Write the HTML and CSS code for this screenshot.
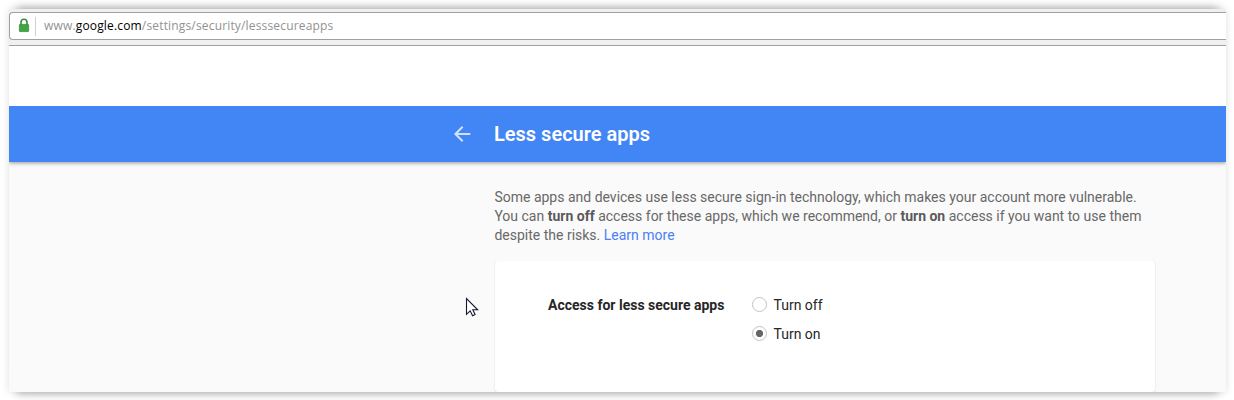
FILE: index.html
```html
<!DOCTYPE html>
<html lang="en">
<head>
<meta charset="utf-8">
<title>Less secure apps</title>
<link rel="stylesheet" href="styles.css">
</head>
<body>
<div class="window">
  <div class="toolbar">
    <div class="address">
      <svg class="lock" width="12" height="15" viewBox="0 0 12 15"><path d="M3 7V4.2a3 3 0 0 1 6 0V7" fill="none" stroke="#388e3c" stroke-width="1.6"/><rect x="1.4" y="6.4" width="9.2" height="7.2" rx=".6" fill="#3fa640" stroke="#388e3c" stroke-width=".8"/></svg>
      <span class="divider"></span>
      <span class="url">www.<span class="host">google.com</span>/settings/security/lesssecureapps</span>
    </div>
  </div>
  <div class="blank"></div>
  <header class="header">
    <svg class="back" width="18" height="18" viewBox="0 0 18 18" fill="none" stroke="#d0e1fd" stroke-width="2"><path d="M17.3 9H2.4M9.7 1.7 2.4 9l7.3 7.3"/></svg>
    <h1 class="title">Less secure apps</h1>
  </header>
  <main class="content">
    <p class="intro"><span class="line line-1">Some apps and devices use less secure sign-in technology, which makes your account more vulnerable.</span><span class="line line-2">You can <b>turn off</b> access for these apps, which we recommend, or <b>turn on</b> access if you want to use them</span><span class="line line-3">despite the risks. <a class="link">Learn more</a></span></p>
    <section class="card">
      <div class="label">Access for less secure apps</div>
      <div class="options">
        <div class="option"><span class="radio"></span>Turn off</div>
        <div class="option"><span class="radio checked"></span>Turn on</div>
      </div>
    </section>
  </main>
</div>
<svg class="cursor" width="14" height="21" viewBox="0 0 14 21"><path d="M1.5 1.5v15.8l3.7-3.5 2.4 5 2.5-1.2-2.3-4.8h4.9z" fill="#fff" stroke="#15182c" stroke-width="1.1"/></svg>
</body>
</html>
```
FILE: styles.css
```css
body {
  margin: 0;
  padding: 9px 8px 8px 9px;
  box-sizing: border-box;
  height: 400px;
  overflow: hidden;
  background: #fff;
  font-family: Roboto, sans-serif;
}
.window {
  display: flex;
  flex-direction: column;
  height: 383px;
  background: #fafafa;
  box-shadow: 0 0 8px rgba(0, 0, 0, .12), 0 -10px 8px -8px rgba(0, 0, 0, .26), 0 10px 8px -8px rgba(0, 0, 0, .26);
}
.toolbar {
  box-sizing: border-box;
  height: 37px;
  padding-top: 3px;
  background: #f0f0f0;
  border-bottom: 1px solid #a0a0a0;
}
.address {
  box-sizing: border-box;
  height: 28px;
  display: flex;
  align-items: center;
  padding-left: 8px;
  background: #fff;
  border: 1px solid #a0a0a0;
  border-right: 0;
  border-radius: 4px 0 0 4px;
}
.lock { margin-top: -2px; }
.divider {
  width: 1px;
  height: 19px;
  margin: 0 8px 0 5px;
  background: #d0d0d0;
}
.url {
  font-family: "Open Sans", sans-serif;
  font-size: 12px;
  line-height: 16px;
  letter-spacing: .165px;
  color: #929292;
}
.host { color: #000; }
.blank {
  height: 60px;
  background: #fff;
}
.header {
  position: relative;
  height: 56px;
  display: flex;
  align-items: center;
  padding-left: 444px;
  background: #4285f4;
  box-shadow: 0 1px 4px rgba(0, 0, 0, .4);
  clip-path: inset(0 0 -6px 0);
}
.title {
  margin: 0 0 0 23px;
  font-size: 20px;
  font-weight: 600;
  line-height: 28px;
  color: #fff;
}
.content {
  flex: 1;
  padding: 26px 71px 0 486px;
}
.intro {
  margin: 0 0 16px -.6px;
  font-size: 14px;
  line-height: 19px;
  color: #686868;
}
.line {
  display: block;
  white-space: nowrap;
}
.intro b {
  font-weight: 700;
  color: #5a5a5a;
}
.link { color: #4a80f5; }
.card {
  box-sizing: border-box;
  height: 131px;
  display: flex;
  padding: 34px 0 0 53px;
  background: #fff;
  border-radius: 3px;
  box-shadow: 0 0 2px rgba(0, 0, 0, .12), 0 1px 1px rgba(0, 0, 0, .08);
  clip-path: inset(0 -3px 0 -3px);
  font-size: 14px;
  line-height: 20px;
  color: #262626;
}
.label {
  width: 204px;
  font-weight: 700;
}
.options {
  display: flex;
  flex-direction: column;
  gap: 9px;
}
.option {
  display: flex;
  gap: 6.5px;
}
.radio {
  box-sizing: border-box;
  width: 15px;
  height: 15px;
  margin-top: 2px;
  border: 1px solid #c4c4c4;
  border-radius: 50%;
}
.checked { background: radial-gradient(circle, #666 3.2px, transparent 4px); }
.cursor {
  position: absolute;
  left: 465px;
  top: 297px;
}
```
